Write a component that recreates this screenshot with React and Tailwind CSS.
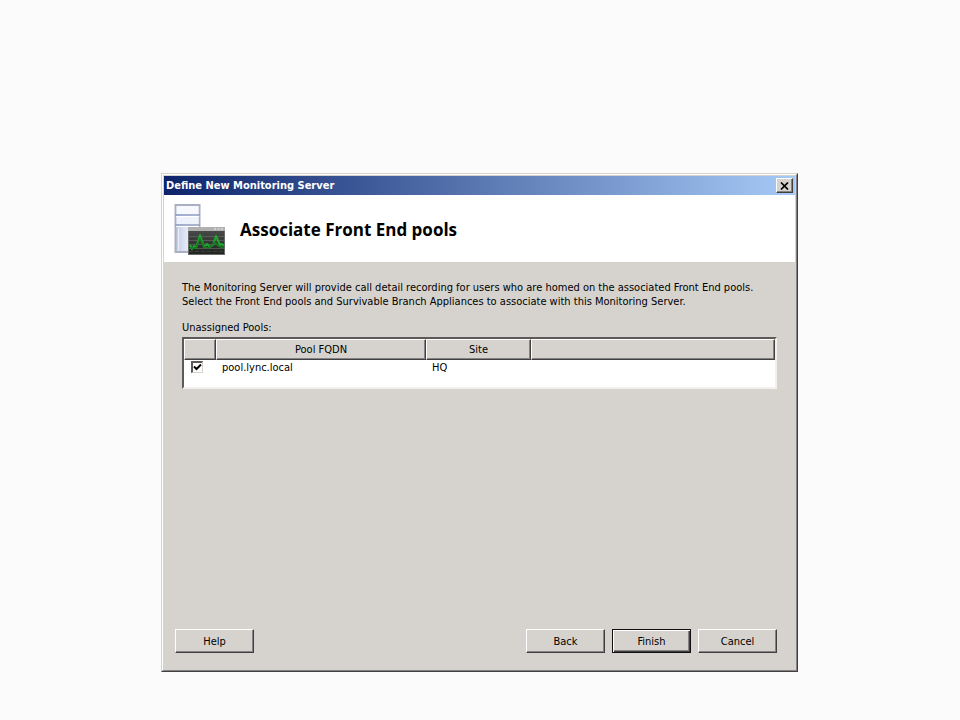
import React, { useState } from 'react';

const initialPools = [
  { id: 1, fqdn: 'pool.lync.local', site: 'HQ', selected: true },
];

function ServerIcon() {
  return (
    <svg width="52" height="52" viewBox="0 0 52 52" aria-hidden="true">
      <defs>
        <linearGradient id="tower" x1="0" y1="0" x2="1" y2="0">
          <stop offset="0" stopColor="#c0cae4" />
          <stop offset="0.4" stopColor="#dfe5f5" />
          <stop offset="1" stopColor="#f4f6fc" />
        </linearGradient>
        <linearGradient id="screen" x1="0" y1="0" x2="0" y2="1">
          <stop offset="0" stopColor="#4c4f4c" />
          <stop offset="1" stopColor="#202320" />
        </linearGradient>
      </defs>
      <rect x="1.5" y="1" width="24" height="47" fill="url(#tower)" stroke="#a9b0c2" strokeWidth="2" />
      <path d="M2.5 2h22v8h-22z" fill="#f6f8fd" />
      <path d="M2.5 13h22v7h-22z" fill="#eef2fb" />
      <path d="M1 11h25M1 21h25" stroke="#93a0c4" strokeWidth="1.5" />
      <path d="M2 12.5h23M2 22.5h23" stroke="#fff" />
      <path d="M4.5 24v23" stroke="#fff" strokeOpacity="0.6" />
      <rect x="14.5" y="23.5" width="36" height="27" fill="url(#screen)" stroke="#6a6a6a" />
      <path d="M14 23h37v4H14z" fill="#b0b0b0" />
      <path d="M40 25h2M43.5 25h2M47 25h2" stroke="#eee" />
      <path d="M15 32.5h35M15 36.5h35M15 40.5h35M15 44.5h35" stroke="#6b716b" strokeOpacity="0.6" />
      <path d="M15 47.5h35" stroke="#3a413a" strokeDasharray="4 2" />
      <path d="M16 41l2 4 2-3 2 2 4-13 4 12 3-3 3 3 3-2 3-9 4 9 2-1 2 2" fill="none" stroke="#20a532" strokeWidth="2" strokeLinejoin="round" />
      <path d="M16 44h6l4-9 4 8 5 1 6-6 3 4 6 2" fill="none" stroke="#117a1b" strokeWidth="1.5" />
    </svg>
  );
}

function TitleBar({ title, onClose }) {
  return (
    <div className="flex h-[19px] items-center justify-between bg-linear-to-r/srgb from-[#0d246b] to-[#a6caf7] px-[2px]">
      <h1 className="leading-4 font-bold text-white">{title}</h1>
      <button
        type="button"
        aria-label="Close"
        onClick={onClose}
        className="flex h-[15px] w-[17px] items-center justify-center border border-t-white border-r-[#404040] border-b-[#404040] border-l-white bg-[#d6d3ce] shadow-[inset_-1px_-1px_0_#848284]"
      >
        <svg width="9" height="8" viewBox="0 0 9 8" aria-hidden="true">
          <path d="M1 0.5l7 7M8 0.5l-7 7" stroke="#000" strokeWidth="1.7" />
        </svg>
      </button>
    </div>
  );
}

function DialogButton({ children, primary, onClick }) {
  return (
    <button
      type="button"
      onClick={onClick}
      className={
        primary
          ? 'h-6 w-[79px] border border-[#101010] bg-[#d6d3ce] pt-px text-center shadow-[inset_1px_1px_0_#fff,inset_-1px_-1px_0_#404040,inset_-2px_-2px_0_#848284]'
          : 'h-6 w-[79px] border border-t-white border-r-[#404040] border-b-[#404040] border-l-white bg-[#d6d3ce] pt-px text-center shadow-[inset_-1px_-1px_0_#848284]'
      }
    >
      {children}
    </button>
  );
}

function HeaderCell({ children, className }) {
  return (
    <th
      scope="col"
      className={`h-[21px] border border-t-white border-r-[#404040] border-b-[#404040] border-l-white bg-[#d6d3ce] px-0 pt-px pb-0 text-center font-normal shadow-[inset_-1px_-1px_0_#848284] ${className}`}
    >
      {children}
    </th>
  );
}

function PoolTable({ pools, togglePool }) {
  return (
    <div className="min-h-[52px] border-2 border-t-[#5c5a58] border-r-[#f2f1ee] border-b-[#f2f1ee] border-l-[#5c5a58] bg-white">
      <table aria-labelledby="pools-label" className="w-full table-fixed border-separate border-spacing-0">
        <thead>
          <tr>
            <HeaderCell className="w-8" />
            <HeaderCell className="w-[210px]">Pool FQDN</HeaderCell>
            <HeaderCell className="w-[105px]">Site</HeaderCell>
            <HeaderCell />
          </tr>
        </thead>
        <tbody>
          {pools.map((pool) => (
            <tr key={pool.id}>
              <td className="p-0 pl-[7px]">
                <span className="grid h-4 w-3 items-start pt-px">
                  <input
                    type="checkbox"
                    aria-label={pool.fqdn}
                    checked={pool.selected}
                    onChange={() => togglePool(pool.id)}
                    className="peer col-start-1 row-start-1 h-3 w-3 appearance-none border-t-2 border-r border-b border-l-2 border-t-[#5c5a58] border-r-[#d6d3ce] border-b-[#d6d3ce] border-l-[#5c5a58] bg-white"
                  />
                  <svg
                    width="12"
                    height="12"
                    viewBox="0 0 12 12"
                    aria-hidden="true"
                    className="pointer-events-none invisible col-start-1 row-start-1 peer-checked:visible"
                  >
                    <path d="M3 5.5l2.5 2.5L10 3.5" fill="none" stroke="#000" strokeWidth="2" />
                  </svg>
                </span>
              </td>
              <td className="p-0 pl-[6px]">{pool.fqdn}</td>
              <td className="p-0 pl-[6px]">{pool.site}</td>
              <td className="p-0" />
            </tr>
          ))}
        </tbody>
      </table>
    </div>
  );
}

export default function App() {
  const [pools, setPools] = useState(initialPools);
  const [open, setOpen] = useState(true);

  const togglePool = (id) => {
    setPools(pools.map((pool) => (
      pool.id === id ? { ...pool, selected: !pool.selected } : pool
    )));
  };

  const close = () => setOpen(false);

  return (
    <main className="flex min-h-screen flex-col bg-[#fbfbfb] pt-[173px] pr-[162px] pb-12 pl-[161px] font-['DejaVu_Sans_Condensed','DejaVu_Sans',sans-serif] text-[11px] leading-[14px] text-black">
      {open && (
        <section className="flex grow flex-col border border-t-[#d6d3ce] border-r-[#404040] border-b-[#404040] border-l-[#d6d3ce] bg-[#d6d3ce]">
          <div className="flex grow flex-col border border-t-white border-r-[#848284] border-b-[#848284] border-l-white p-px">
            <TitleBar title="Define New Monitoring Server" onClose={close} />
            <header className="flex h-[67px] items-center gap-[14px] bg-white px-[10px] pt-[2px]">
              <ServerIcon />
              <h2 className="font-['Open_Sans','Noto_Sans',sans-serif] text-[17px] leading-6 font-bold">Associate Front End pools</h2>
            </header>
            <div className="grow px-[18px] pt-[19px]">
              <p>
                The Monitoring Server will provide call detail recording for users who are homed on the associated Front End pools.
                Select the Front End pools and Survivable Branch Appliances to associate with this Monitoring Server.
              </p>
              <div id="pools-label" className="mt-3 mb-[2px]">Unassigned Pools:</div>
              <PoolTable pools={pools} togglePool={togglePool} />
            </div>
            <footer className="flex justify-between pr-[18px] pb-4 pl-[11px]">
              <DialogButton>Help</DialogButton>
              <div className="flex gap-[7px]">
                <DialogButton>Back</DialogButton>
                <DialogButton primary onClick={close}>Finish</DialogButton>
                <DialogButton onClick={close}>Cancel</DialogButton>
              </div>
            </footer>
          </div>
        </section>
      )}
    </main>
  );
}
